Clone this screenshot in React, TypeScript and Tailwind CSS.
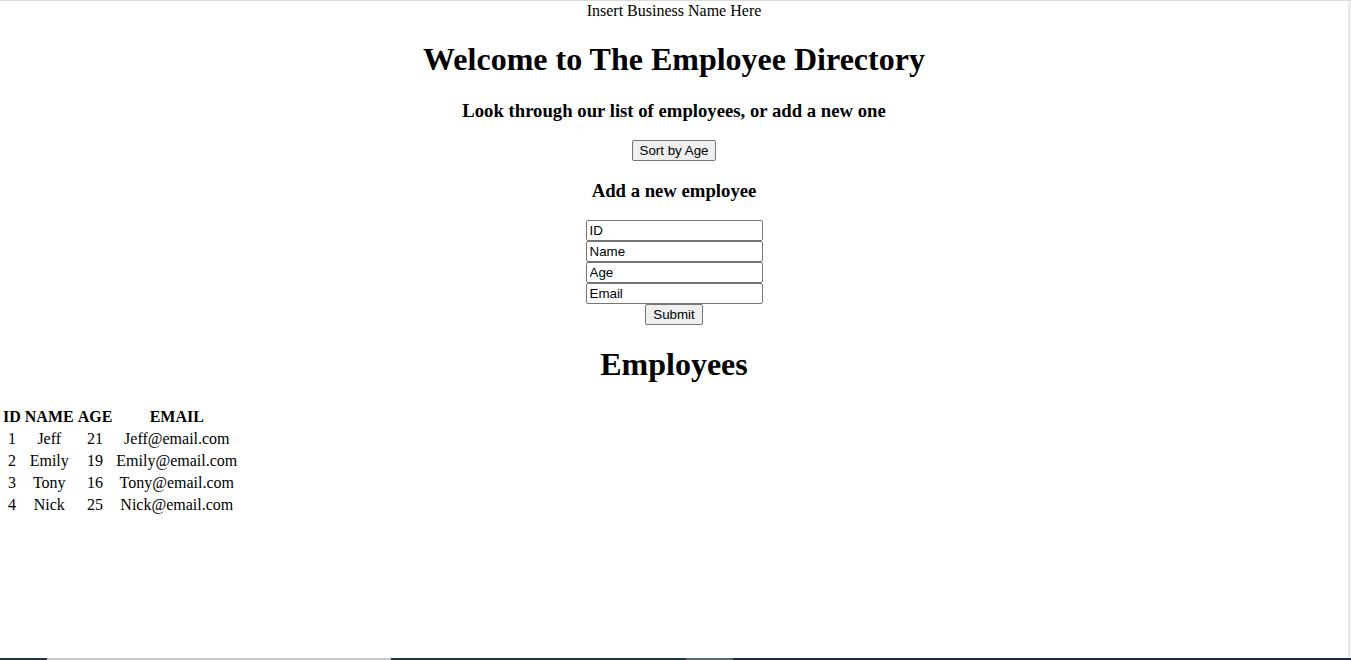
import { useState } from "react";

type Employee = { id: number; name: string; age: number; email: string };

const initial: Employee[] = [
  { id: 1, name: "Jeff", age: 21, email: "Jeff@email.com" },
  { id: 2, name: "Emily", age: 19, email: "Emily@email.com" },
  { id: 3, name: "Tony", age: 16, email: "Tony@email.com" },
  { id: 4, name: "Nick", age: 25, email: "Nick@email.com" },
];

const inputCls =
  "block mx-auto w-[177px] h-[21px] px-[3px] py-[1px] border border-[#767676] rounded-[2px] text-[13.33px] text-black font-['Liberation_Sans',Arial,sans-serif] placeholder:text-black bg-white";

const btnCls =
  "inline-block px-[7px] py-[1px] h-[21px] text-[13.33px] leading-[17px] text-black bg-[#efefef] border border-[#767676] rounded-[2px] font-['Liberation_Sans',Arial,sans-serif]";

export default function App() {
  const [employees, setEmployees] = useState<Employee[]>(initial);

  const sortByAge = () => {
    setEmployees([...employees].sort((a, b) => a.age - b.age));
  };

  return (
    <div className="h-[660px] flex flex-col bg-white border-t border-[#dcdcdc] overflow-hidden">
      <div className="flex-1 flex">
        <main className="flex-1 pt-[1px] font-['Liberation_Serif','Times_New_Roman',serif] text-base text-black leading-[18px]">
          <div className="text-center">Insert Business Name Here</div>

          {/* Header */}
          <h1 className="text-[32px] font-bold text-center leading-[37px] my-[21.44px]">
            Welcome to The Employee Directory
          </h1>
          <h3 className="text-[18.72px] font-bold text-center leading-[21.5px] my-[18.72px]">
            Look through our list of employees, or add a new one
          </h3>
          <div className="text-center">
            <button className={btnCls} onClick={sortByAge}>
              Sort by Age
            </button>
          </div>

          {/* Form */}
          <h3 className="text-[18.72px] font-bold text-center leading-[21.5px] my-[18.72px]">
            Add a new employee
          </h3>
          <form className="text-center" onSubmit={(e) => e.preventDefault()}>
            <input className={inputCls} placeholder="ID" />
            <input className={inputCls} placeholder="Name" />
            <input className={inputCls} placeholder="Age" />
            <input className={inputCls} placeholder="Email" />
            <button type="submit" className={btnCls}>
              Submit
            </button>
          </form>

          {/* Table */}
          <h1 className="text-[32px] font-bold text-center leading-[37px] my-[21.44px]">
            Employees
          </h1>
          <table className="border-separate border-spacing-[2px]">
            <thead>
              <tr>
                <th className="p-[1px] font-bold">ID</th>
                <th className="p-[1px] font-bold">NAME</th>
                <th className="p-[1px] font-bold">AGE</th>
                <th className="p-[1px] font-bold">EMAIL</th>
              </tr>
            </thead>
            <tbody>
              {employees.map((e) => (
                <tr key={e.id}>
                  <td className="p-[1px] text-center">{e.id}</td>
                  <td className="p-[1px] text-center">{e.name}</td>
                  <td className="p-[1px] text-center">{e.age}</td>
                  <td className="p-[1px] text-center">{e.email}</td>
                </tr>
              ))}
            </tbody>
          </table>
        </main>
        <div className="w-[3px] bg-[#f1f1f1] border-l border-[#e4e4e4]" />
      </div>
      <div className="h-[2px] flex">
        <div className="w-[47px] bg-[#1f3a44]" />
        <div className="w-[344px] bg-[#c8c8c8]" />
        <div className="w-[295px] bg-[#1f3a44]" />
        <div className="w-[47px] bg-[#5c6b70]" />
        <div className="flex-1 bg-[#1d2b44]" />
      </div>
    </div>
  );
}
